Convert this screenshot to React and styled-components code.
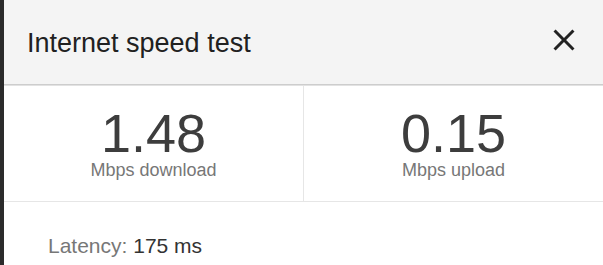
import React from "react";
import styled, { createGlobalStyle } from "styled-components";

const GlobalStyle = createGlobalStyle`
  html, body {
    margin: 0;
    padding: 0;
    background: #fff;
    font-family: "Liberation Sans", Arial, sans-serif;
  }
`;

export default function App() {
  const stats = [
    { value: "1.48", label: "Mbps download" },
    { value: "0.15", label: "Mbps upload" },
  ];
  return (
    <>
      <GlobalStyle />
      <StyledPage>
        <div className="edge" />
        <Panel>
          <Header>
            <Title>Internet speed test</Title>
            <CloseButton aria-label="Close">
              <svg viewBox="0 0 24 24" width="36" height="36">
                <path
                  fill="#222"
                  d="M19 6.41L17.59 5 12 10.59 6.41 5 5 6.41 10.59 12 5 17.59 6.41 19 12 13.41 17.59 19 19 17.59 13.41 12z"
                />
              </svg>
            </CloseButton>
          </Header>
          <StatsRow>
            {stats.map((stat, i) => (
              <Stat key={stat.label} divider={i > 0}>
                <Value>{stat.value}</Value>
                <Label>{stat.label}</Label>
              </Stat>
            ))}
          </StatsRow>
          <Latency>
            <span className="key">Latency: </span>
            <span className="val">175 ms</span>
          </Latency>
        </Panel>
      </StyledPage>
    </>
  );
}

const StyledPage = styled.div`
  display: flex;
  min-height: 265px;

  .edge {
    width: 4px;
    flex: none;
    background: #2b2b2b;
  }
`;

const Panel = styled.div`
  flex: 1;
  display: flex;
  flex-direction: column;
  background: #fff;
`;

const Header = styled.div`
  height: 84px;
  display: flex;
  align-items: center;
  justify-content: space-between;
  padding: 0 21px 0 23px;
  background: #f4f4f4;
  border-bottom: 1px solid #cdcdcd;
  box-shadow: 0 1px 0 #e2e2e2;
`;

const Title = styled.div`
  font-size: 27px;
  color: #212121;
  line-height: 1;
  margin-top: 2px;
`;

const CloseButton = styled.button`
  border: none;
  background: none;
  padding: 0;
  width: 36px;
  height: 36px;
  display: flex;
  margin-top: -4px;
  cursor: pointer;
`;

const StatsRow = styled.div`
  display: flex;
  margin-top: 1px;
  border-bottom: 1px solid #e6e6e6;
`;

const Stat = styled.div`
  flex: 1;
  display: flex;
  flex-direction: column;
  align-items: center;
  padding: 22px 0 22px;
  border-left: ${(p) => (p.divider ? "1px solid #e6e6e6" : "none")};
`;

const Value = styled.div`
  font-size: 54px;
  line-height: 50px;
  height: 50px;
  color: #3d3d3d;
`;

const Label = styled.div`
  font-size: 18px;
  line-height: 18px;
  margin-top: 3px;
  color: #777;
`;

const Latency = styled.div`
  padding: 33px 0 0 44px;
  font-size: 21px;
  line-height: 1;

  .key {
    color: #777;
  }
  .val {
    color: #333;
  }
`;
